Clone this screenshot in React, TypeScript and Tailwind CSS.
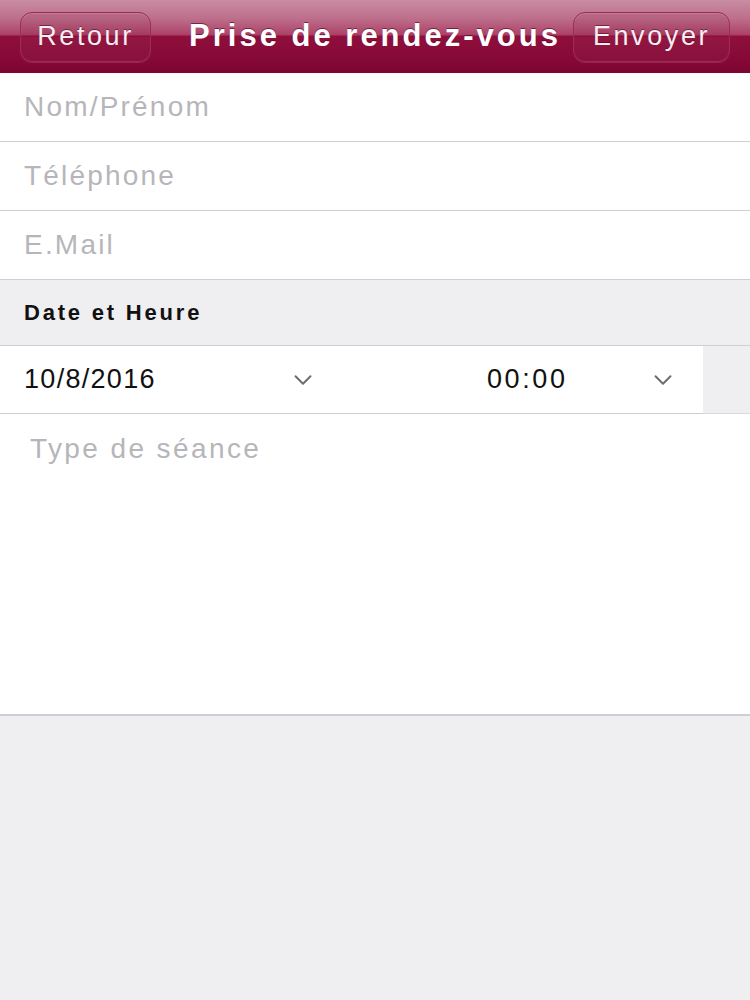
import { ChevronDown } from "lucide-react";

const font = { fontFamily: '"Liberation Sans", Arial, sans-serif' };

function NavButton({ label, className }: { label: string; className: string }) {
  return (
    <button
      className={`h-[50px] rounded-[12px] border border-[#9e2c52] bg-[linear-gradient(180deg,rgba(120,10,50,0.12)_0%,rgba(120,10,50,0.12)_50%,rgba(255,255,255,0.03)_50%,rgba(255,255,255,0.03)_100%)] shadow-[inset_0_1px_1px_rgba(255,255,255,0.15),0_1px_0_rgba(255,255,255,0.12)] text-[27px] tracking-[2.6px] text-[#f6eef1] [text-shadow:0_-1px_0_rgba(60,0,20,0.5)] ${className}`}
    >
      {label}
    </button>
  );
}

function Field({ placeholder }: { placeholder: string }) {
  return (
    <div className="h-[69px] flex items-center px-6 border-b border-[#cfcfd3] bg-white">
      <span className="text-[28px] tracking-[2.2px] text-[#b6b6ba]">{placeholder}</span>
    </div>
  );
}

export default function App() {
  return (
    <div className="w-[750px] h-[1000px] bg-[#efeef0] flex flex-col overflow-hidden" style={font}>
      {/* nav bar */}
      <div className="h-[73px] grid grid-cols-[1fr_auto_1fr] items-center px-5 bg-[linear-gradient(180deg,#c98ca3_0%,#bd6f8b_25%,#ad4368_47%,#8e0f3c_50%,#880a38_75%,#7e0531_100%)]">
        <NavButton label="Retour" className="w-[131px] justify-self-start" />
        <h1 className="text-[31px] font-bold tracking-[3px] text-white [text-shadow:0_-1px_0_rgba(70,0,25,0.6)]">
          Prise de rendez-vous
        </h1>
        <NavButton label="Envoyer" className="w-[157px] justify-self-end" />
      </div>

      <Field placeholder="Nom/Prénom" />
      <Field placeholder="Téléphone" />
      <Field placeholder="E.Mail" />

      {/* section */}
      <div className="h-[66px] flex items-center px-6 border-b border-[#cfcfd3] bg-[#efeef0]">
        <span className="text-[22px] font-bold tracking-[2.8px] text-[#111]">Date et Heure</span>
      </div>

      <div className="h-[68px] flex bg-[#efeef0]">
        <div className="w-[703px] flex items-center bg-white border-b border-[#cfcfd3]">
          <div className="w-[330px] flex items-center justify-between pl-6 pr-[12px]">
            <span className="text-[27px] tracking-[1.3px] text-[#111]">10/8/2016</span>
            <ChevronDown className="w-[30px] h-[30px] text-[#6e6e72]" strokeWidth={1.6} />
          </div>
          <div className="flex-1 flex items-center justify-between pl-[157px] pr-[25px]">
            <span className="text-[27px] tracking-[2.6px] text-[#111]">00:00</span>
            <ChevronDown className="w-[30px] h-[30px] text-[#6e6e72]" strokeWidth={1.6} />
          </div>
        </div>
        <div className="flex-1 border-b border-[#d9d9dc]" />
      </div>

      <div className="h-[302px] bg-white border-b-2 border-[#cfcfd3] px-[30px] pt-[14px]">
        <span className="text-[28px] tracking-[2.4px] text-[#b6b6ba]">Type de séance</span>
      </div>

      <div className="flex-1 bg-[#efeef0]" />
    </div>
  );
}
